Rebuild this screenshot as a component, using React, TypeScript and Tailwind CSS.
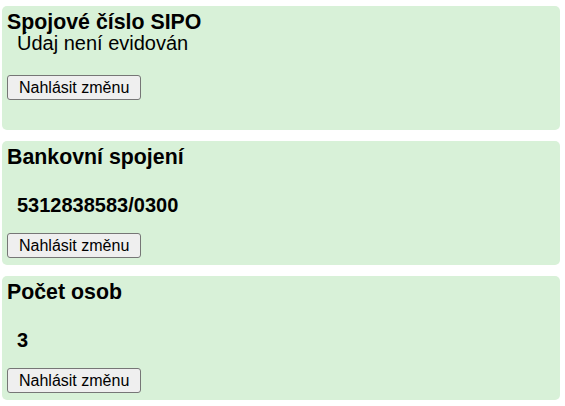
import React from 'react';

type Item = {
  title: string;
  value: string;
  bold: boolean;
};

const items: Item[] = [
  { title: 'Spojové číslo SIPO', value: 'Údaj není evidován', bold: false },
  { title: 'Bankovní spojení', value: '5312838583/0300', bold: true },
  { title: 'Počet osob', value: '3', bold: true },
];

const ChangeButton: React.FC = () => (
  <button
    type="button"
    className="h-[25px] px-[11px] flex items-center text-[16px] leading-[18px] text-black bg-[#efefef] border border-[#767676] rounded-[3px] hover:bg-[#e5e5e5]"
  >
    Nahlásit změnu
  </button>
);

const Card: React.FC<{ item: Item }> = ({ item }) => (
  <section className="h-[124px] w-[558px] bg-[#d8f1d8] rounded-[5px] px-[5px] pt-[6px] flex flex-col">
    <h2 className="text-[21.33px] leading-[21px] font-bold text-black">{item.title}</h2>
    {item.bold ? (
      <>
        <p className="mt-[27px] ml-[10px] text-[20px] leading-[20px] font-bold text-black">{item.value}</p>
        <div className="mt-[18px]">
          <ChangeButton />
        </div>
      </>
    ) : (
      <>
        <p className="ml-[10px] text-[20px] leading-[20px] text-black">{item.value}</p>
        <div className="mt-[22px]">
          <ChangeButton />
        </div>
      </>
    )}
  </section>
);

const App: React.FC = () => {
  return (
    <div
      className="w-[565px] h-[406px] bg-white pt-[6px] pl-[2px] flex flex-col gap-[11px]"
      style={{ fontFamily: '"Liberation Sans", Arial, sans-serif' }}
    >
      {items.map((item) => (
        <Card key={item.title} item={item} />
      ))}
    </div>
  );
};

export default App;
